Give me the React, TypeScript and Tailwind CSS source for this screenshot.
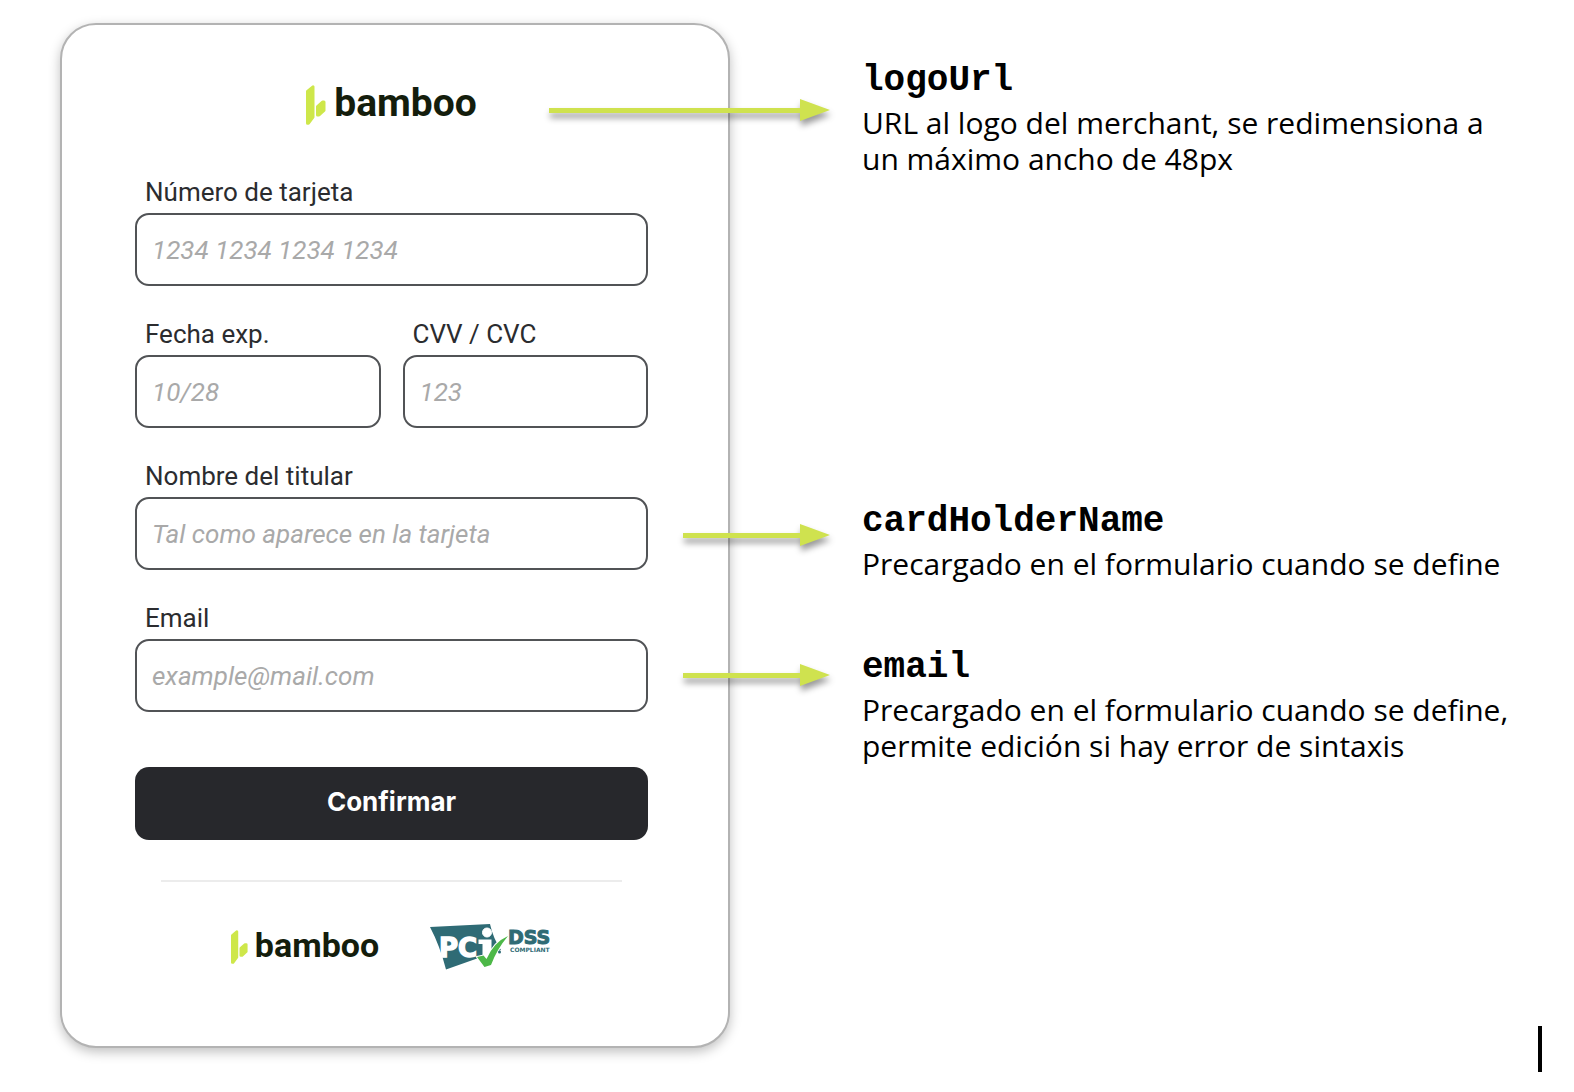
import type { ReactNode } from "react";

function BambooMark({ className }: { className: string }) {
  return (
    <svg
      viewBox="0 0 20 40"
      className={className}
      fill="#cee74a"
      stroke="#cee74a"
      strokeWidth="3"
      strokeLinejoin="round"
      aria-hidden="true"
    >
      <path d="M1.500 6.500L7 1.800V32L2.500 38.200H1.500Z" />
      <path d="M11.500 21.500L16.500 17H18V25.500L13 30H11.500Z" />
    </svg>
  );
}

function PciLogo() {
  return (
    <svg viewBox="0 0 121 46" className="h-[46px] w-[121px] overflow-visible" role="img" aria-label="PCI DSS Compliant">
      <path d="M-1 3L59 0Q62 14 70 26L15 45.500Q9 22 -1 3Z" fill="#2f6b75" />
      <g fill="#fff" stroke="#fff">
        <text x="8" y="33" fontSize="26" fontWeight="700" strokeWidth="1.400" fontFamily="DejaVu Sans, sans-serif">
          PC
        </text>
        <circle cx="56" cy="8.500" r="4.500" />
        <path d="M47.500 15.500H60.500V34H51.500V20H47.500Z" stroke="none" />
      </g>
      <path
        d="M46 33L52.500 31.500L55.500 35Q63 18 77 12Q66 25 60 41L53.500 43Z"
        fill="#4db848"
        stroke="#fff"
        strokeWidth="2"
        paintOrder="stroke"
      />
      <circle cx="68.500" cy="28" r="1.500" fill="#2f6b75" />
      <g fill="#2f6b75" stroke="#2f6b75" fontWeight="700" fontFamily="DejaVu Sans, sans-serif">
        <text x="77" y="20" fontSize="19" strokeWidth="1">
          DSS
        </text>
        <text x="79" y="28" fontSize="6" stroke="none">
          COMPLIANT
        </text>
      </g>
    </svg>
  );
}

type FieldProps = { id: string; label: string; placeholder: string; type?: string };

function Field({ id, label, placeholder, type = "text" }: FieldProps) {
  return (
    <div className="flex min-w-0 flex-1 flex-col">
      <label htmlFor={id} className="pb-1.5 pl-2.5 text-[26px] leading-[30px] text-[#2b2c2f]">
        {label}
      </label>
      <input
        id={id}
        type={type}
        placeholder={placeholder}
        className="h-[73px] w-full rounded-[14px] border-2 border-[#515356] bg-white px-[15px] text-[26px] text-[#2b2c2f] outline-none placeholder:text-[#a9a9a9] placeholder:italic"
      />
    </div>
  );
}

function Arrow({ className }: { className: string }) {
  return (
    <div
      className={
        "absolute right-full mr-8 flex items-center drop-shadow-[1px_5px_3px_rgba(0,0,0,0.4)] " + className
      }
      aria-hidden="true"
    >
      <div className="h-[5px] flex-1 bg-[#cfe24f]" />
      <svg viewBox="0 0 30 22" className="h-[22px] w-[30px]" fill="#cfe24f">
        <path d="M0 0L30 11L0 22Z" />
      </svg>
    </div>
  );
}

function Note({ name, arrow, children }: { name: string; arrow: string; children: ReactNode }) {
  return (
    <article className="relative">
      <Arrow className={arrow} />
      <h2 className="font-['Liberation_Mono',monospace] text-[36px] leading-[44px] font-bold">{name}</h2>
      <p className="mt-0.5 font-['Open_Sans',sans-serif] text-[30px] leading-9">{children}</p>
    </article>
  );
}

export default function App() {
  return (
    <main className="grid grid-cols-[670fr_680fr] gap-[132px] bg-white pt-[23px] pr-8 pb-5 pl-[60px] text-black">
      <section className="mb-6 rounded-[36px] border-2 border-[#b3b3b3] bg-white pt-[60px] pr-20 pb-[76px] pl-[73px] font-['Roboto',sans-serif] shadow-[0_4px_12px_rgba(0,0,0,0.25)]">
        <div className="flex h-10 items-center justify-center gap-2">
          <BambooMark className="h-10 w-5" />
          <span className="pb-1 text-[39px] leading-9 font-bold text-[#141d0c]">bamboo</span>
        </div>

        <form className="mt-[52px]" onSubmit={(e) => e.preventDefault()}>
          <div className="flex flex-col gap-[33px]">
            <Field id="card" label="Número de tarjeta" placeholder="1234 1234 1234 1234" />
            <div className="flex gap-[22px]">
              <Field id="expiry" label="Fecha exp." placeholder="10/28" />
              <Field id="cvv" label="CVV / CVC" placeholder="123" />
            </div>
            <Field id="holder" label="Nombre del titular" placeholder="Tal como aparece en la tarjeta" />
            <Field id="email" type="email" label="Email" placeholder="example@mail.com" />
          </div>
          <button
            type="submit"
            className="mt-[55px] h-[73px] w-full rounded-[14px] bg-[#27282c] pb-1 font-['Inter',sans-serif] text-[26px] font-bold text-white"
          >
            Confirmar
          </button>
        </form>

        <hr className="mx-[26px] mt-10 border-t-2 border-[#ececec]" />

        <footer className="mt-[42px] flex items-center justify-center gap-[52px]">
          <div className="flex items-center gap-[7px]">
            <BambooMark className="h-[34px] w-[17px]" />
            <span className="pb-1 text-[34px] leading-9 font-bold text-[#141d0c]">bamboo</span>
          </div>
          <PciLogo />
        </footer>
      </section>

      <aside className="flex flex-col pt-9">
        <Note name="logoUrl" arrow="top-10 w-[281px]">
          URL al logo del merchant, se redimensiona a
          <br />
          un máximo ancho de 48px
        </Note>
        <div className="mt-[323px] flex flex-col gap-16">
          <Note name="cardHolderName" arrow="top-6 w-[147px]">
            Precargado en el formulario cuando se define
          </Note>
          <Note name="email" arrow="top-[18px] w-[147px]">
            Precargado en el formulario cuando se define,
            <br />
            permite edición si hay error de sintaxis
          </Note>
        </div>
        <div className="mt-auto h-[46px] w-1 self-end bg-black" />
      </aside>
    </main>
  );
}
